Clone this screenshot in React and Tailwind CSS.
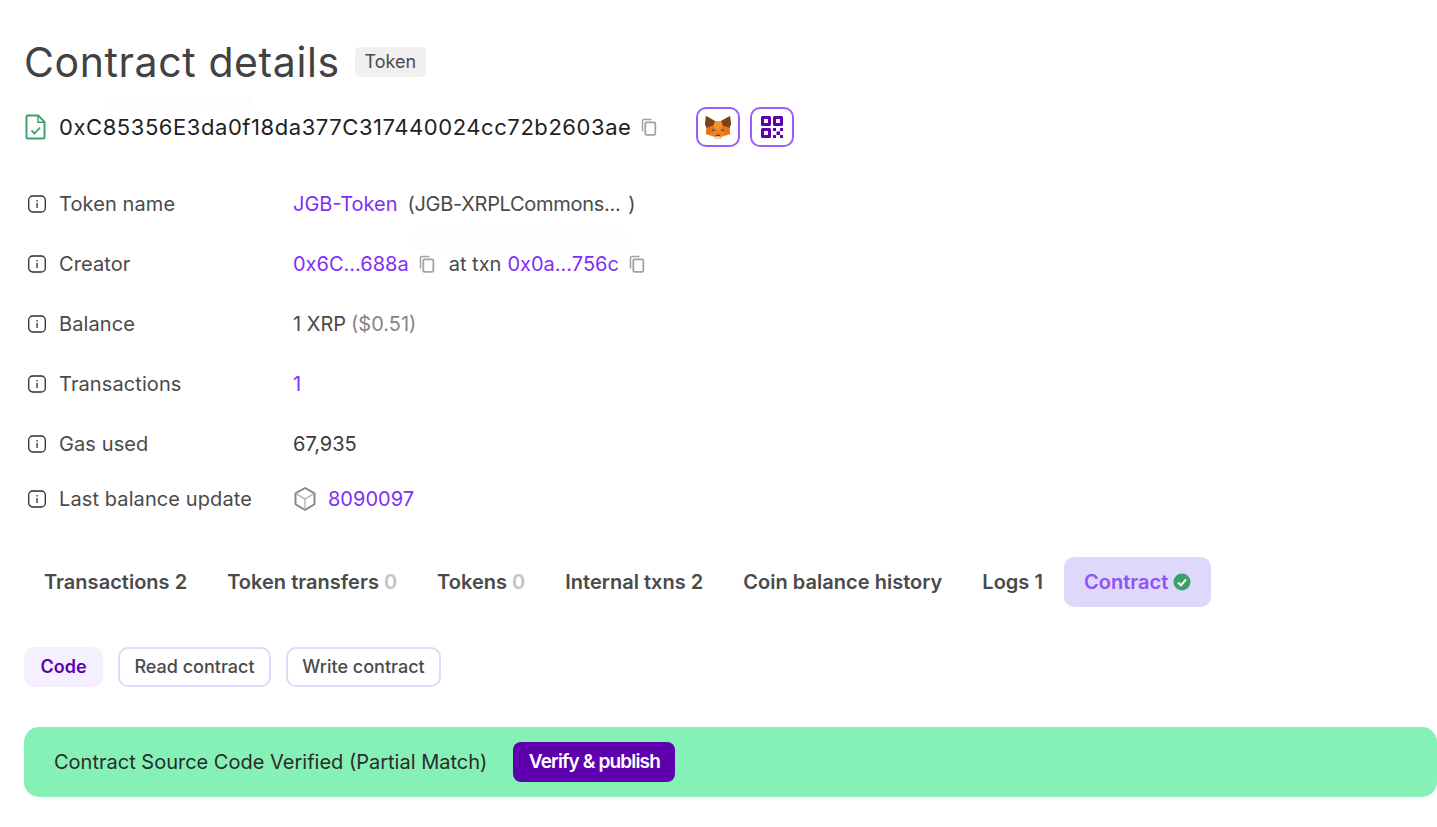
import React from "react";

const Info = () => (
  <svg width="20" height="20" viewBox="0 0 20 20" fill="none" className="shrink-0">
    <rect x="1.700" y="2" width="16.600" height="16" rx="4" stroke="#2d2d2d" strokeWidth="1.300" />
    <rect x="9.400" y="9" width="1.300" height="5" fill="#2d2d2d" />
    <rect x="9.400" y="6" width="1.300" height="1.500" fill="#2d2d2d" />
  </svg>
);

const Copy = ({ className = "" }) => (
  <svg width="20" height="20" viewBox="0 0 20 20" fill="none" className={`shrink-0 ${className}`}>
    <path d="M3.500 14.500V3.800c0-.7.5-1.300 1.300-1.300h7.700" stroke="#a3a3a3" strokeWidth="1.500" />
    <rect x="6.300" y="5.300" width="10" height="12.600" rx="1.200" stroke="#a3a3a3" strokeWidth="1.800" />
  </svg>
);

const FileCheck = () => (
  <svg width="24" height="26" viewBox="0 0 24 26" fill="none" className="shrink-0">
    <path d="M3.500 1.500h10.700l6.300 6.300v15.600c0 .6-.5 1.100-1.100 1.100H3.500c-.6 0-1-.5-1-1.100V2.600c0-.6.4-1.100 1-1.100Z" stroke="#38a169" strokeWidth="1.900" />
    <path d="M14 1.800v6.400h6.300" stroke="#38a169" strokeWidth="1.400" />
    <path d="M7.500 16.500l3 3 5.500-5.800" stroke="#38a169" strokeWidth="1.800" />
  </svg>
);

const Fox = () => (
  <svg width="26" height="24" viewBox="0 0 26 24">
    <path d="M1 1l9 5h6l9-5 1 8-1.500 4 .5 6-4 1.500-5 1.500-.5 2h-5l-.5-2-5-1.500L1 19l.5-6L0 9Z" fill="#ec8323" />
    <path d="M1 1l9 5-1.500 4.500L1.500 13 0 9Z" fill="#7a4218" />
    <path d="M25 1l-9 5 1.500 4.500 7 2.500L26 9Z" fill="#7a4218" />
    <path d="M10 6h6l1.500 4.500L15 15h-4l-2.500-4.500Z" fill="#f5912f" />
    <path d="M1.500 13l7-2.500L11 15l-3 1-2.500 4L1 19Z" fill="#e2741a" />
    <path d="M24.500 13l-7-2.500L15 15l3 1 2.500 4 4.500-1Z" fill="#e2741a" />
    <path d="M7.500 14.500l3 .8-3.200 1Z" fill="#4a3526" />
    <path d="M18.500 14.500l-3 .8 3.200 1Z" fill="#4a3526" />
    <path d="M10.500 21.500h5l-.5 2.500h-4Z" fill="#e4d5c8" />
    <path d="M11.500 19.700h3l1 1.300h-5Z" fill="#3f3f3f" />
  </svg>
);

const Qr = () => (
  <svg width="24" height="24" viewBox="0 0 24 24" fill="#5f00ae">
    <path fillRule="evenodd" d="M1 2.500A1.500 1.500 0 0 1 2.500 1h7A1.500 1.500 0 0 1 11 2.500v7A1.500 1.500 0 0 1 9.500 11h-7A1.500 1.500 0 0 1 1 9.500ZM4 4v4h4V4Z" />
    <path fillRule="evenodd" d="M13 2.500A1.500 1.500 0 0 1 14.500 1h7A1.500 1.500 0 0 1 23 2.500v7A1.500 1.500 0 0 1 21.500 11h-7A1.500 1.500 0 0 1 13 9.500ZM16 4v4h4V4Z" />
    <path fillRule="evenodd" d="M1 14.500A1.500 1.500 0 0 1 2.500 13h7a1.500 1.500 0 0 1 1.500 1.500v7A1.500 1.500 0 0 1 9.500 23h-7A1.500 1.500 0 0 1 1 21.500ZM4 16v4h4v-4Z" />
    <path d="M13 13h3v3h-3ZM20 13h3v3h-3ZM16.500 16.500h3.500v3.500h-3.500ZM13 20h3v3h-3ZM20 20h3v3h-3Z" />
  </svg>
);

const Box = () => (
  <svg width="24" height="26" viewBox="0 0 24 26" fill="none" className="shrink-0">
    <path d="M12 2l9.500 5.300v11L12 24l-9.500-5.700v-11Z" stroke="#858585" strokeWidth="1.900" strokeLinejoin="round" />
    <path d="M2.800 7.500L12 13l9.200-5.500M12 13v10.500" stroke="#a8a8a8" strokeWidth="1.200" />
  </svg>
);

const Check = () => (
  <svg width="18" height="18" viewBox="0 0 18 18" className="shrink-0">
    <circle cx="9" cy="9" r="8.500" fill="#38a169" />
    <path d="M5 9.500l3 2.800 5-6" fill="none" stroke="#fff" strokeWidth="2" />
  </svg>
);

const Row = ({ label, last, children }) => (
  <div className={`flex items-center ${last ? "h-[50px]" : "h-[60px]"}`}>
    <div className="flex w-[269px] shrink-0 items-center gap-[12px] pl-[3px] tracking-[0.1px] text-[#4a4a4a]">
      <Info />
      <span>{label}</span>
    </div>
    <div className="flex items-center">{children}</div>
  </div>
);

const Tab = ({ children, count }) => (
  <div className="flex h-[50px] items-center px-[20px] whitespace-nowrap text-[#4a4a4a]">
    {children}
    {count !== undefined && <span className="ml-[5px] text-[#c4c4c4]">{count}</span>}
  </div>
);

export default function App() {
  return (
    <div className="relative h-[827px] w-full overflow-hidden bg-white pl-[24px] font-['Inter',sans-serif] text-[20px] leading-[28px]">
      <div className="flex h-[58px] items-center pt-[33px] box-content">
        <h1 className="font-['Inter',sans-serif] text-[41px] leading-[58px] font-normal tracking-[0.6px] text-[#424242]">Contract details</h1>
        <span className="ml-[15px] flex h-[30px] w-[71px] items-center justify-center rounded-[5px] bg-[#f0f0f0] text-[18px] leading-[24px] text-[#4a4a4a]">Token</span>
      </div>

      <div className="mt-[16px] flex h-[40px] items-center">
        <FileCheck />
        <span className="ml-[11px] font-['Inter',sans-serif] text-[22px] tracking-[0.56px] text-[#1f1f1f]">0xC85356E3da0f18da377C317440024cc72b2603ae</span>
        <Copy className="ml-[8px]" />
        <div className="ml-[37px] flex h-[40px] w-[44px] items-center justify-center rounded-[10px] border-2 border-[#9d5cf5]"><Fox /></div>
        <div className="ml-[10px] flex h-[40px] w-[44px] items-center justify-center rounded-[10px] border-2 border-[#9d5cf5]"><Qr /></div>
      </div>

      <div className="mt-[27px]">
        <Row label="Token name">
          <span className="text-[#7f2ff7]">JGB-Token</span>
          <span className="ml-[10px] tracking-[-0.3px] text-[#4a4a4a]">(JGB-XRPLCommons...</span>
          <span className="ml-[8px] text-[#4a4a4a]">)</span>
        </Row>
        <Row label="Creator">
          <span className="text-[#7f2ff7]">0x6C...688a</span>
          <Copy className="ml-[8px]" />
          <span className="ml-[12px] text-[#4a4a4a]">at txn</span>
          <span className="ml-[6px] text-[#7f2ff7]">0x0a...756c</span>
          <Copy className="ml-[8px]" />
        </Row>
        <Row label="Balance">
          <span className="text-[#4a4a4a]">1 XRP</span>
          <span className="ml-[5px] text-[#858585]">($0.51)</span>
        </Row>
        <Row label="Transactions">
          <span className="text-[#7f2ff7]">1</span>
        </Row>
        <Row label="Gas used">
          <span className="text-[#3b3b3b]">67,935</span>
        </Row>
        <Row label="Last balance update" last>
          <Box />
          <span className="ml-[11px] text-[#7f2ff7]">8090097</span>
        </Row>
      </div>

      <div className="mt-[33px] flex items-center font-semibold tracking-[0.02px]">
        <Tab>Transactions 2</Tab>
        <Tab count="0">Token transfers</Tab>
        <Tab count="0">Tokens</Tab>
        <Tab>Internal txns 2</Tab>
        <Tab>Coin balance history</Tab>
        <Tab>Logs 1</Tab>
        <div className="ml-px flex h-[50px] items-center gap-[5px] rounded-[10px] bg-[#ded8fd] px-[20px] text-[#9550f5]">
          Contract <Check />
        </div>
      </div>

      <div className="mt-[40px] flex items-center gap-[15px] text-[18px] font-medium">
        <div className="flex h-[40px] w-[79px] items-center justify-center rounded-[10px] bg-[#f4f0ff] font-semibold text-[#5f00ae]">Code</div>
        <div className="flex h-[40px] w-[153px] items-center justify-center rounded-[10px] border-2 border-[#dfd9fa] text-[#4a4a4a]">Read contract</div>
        <div className="flex h-[40px] w-[155px] items-center justify-center rounded-[10px] border-2 border-[#dfd9fa] text-[#4a4a4a]">Write contract</div>
      </div>

      <div className="mt-[40px] flex h-[70px] items-center rounded-[15px] bg-[#85f1b7] pl-[30px]">
        <span className="text-[#2b2b2b]">Contract Source Code Verified (Partial Match)</span>
        <div className="ml-[26px] flex h-[40px] w-[162px] items-center justify-center rounded-[8px] bg-[#5f00ae] text-[19px] font-semibold tracking-[-0.85px] text-white">Verify &amp; publish</div>
      </div>

      <div className="absolute top-[96px] left-[110px] h-[15px] w-[142px] rounded-[4px] bg-[#fdfdfd]" />
      <div className="absolute top-[228px] left-[415px] h-[22px] w-[211px] rounded-[4px] bg-[#fdfdfd]" />
    </div>
  );
}
